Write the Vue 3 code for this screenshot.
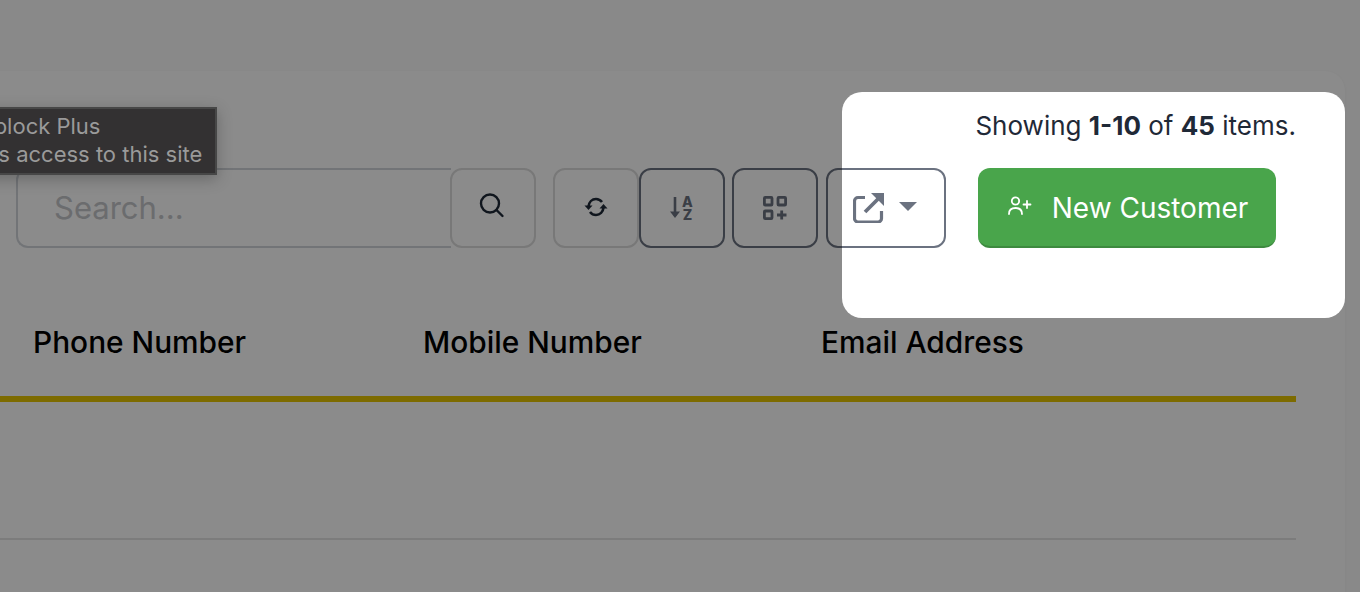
<template>
  <div class="page">
    <div class="card">
      <p class="summary">Showing <b>1-10</b> of <b>45</b> items.</p>

      <div class="toolbar">
        <div class="search-group">
          <input class="search-input" type="text" placeholder="Search..." />
          <button class="btn btn-light search-btn">
            <svg class="nudge-left" width="26" height="26" viewBox="0 0 26 26" fill="none" stroke="#1f2937" stroke-width="2.400" stroke-linecap="round">
              <circle cx="11" cy="10.500" r="9" />
              <path d="M17.500 17l6 6" />
            </svg>
          </button>
        </div>
        <button class="btn btn-light refresh-btn">
          <svg class="nudge-up" width="24" height="20" viewBox="0 0 24 20" fill="none" stroke="#1f2937" stroke-width="2.600">
            <path d="M4.500 9.500C5 5 8 2 12 2c2.600 0 4.600 1.200 6 3" />
            <path d="M19.500 10.500C19 15 16 18 12 18c-2.600 0-4.600-1.200-6-3" />
            <path d="M0.500 8.500h8l-4 4.500z" fill="#1f2937" stroke="none" />
            <path d="M15.500 11.500h8l-4-4.500z" fill="#1f2937" stroke="none" />
          </svg>
        </button>
        <button class="btn btn-dark sort-btn">
          <svg width="26" height="28" viewBox="0 0 26 28" fill="none">
            <path d="M6 3v19" stroke="#6b7280" stroke-width="2.600" />
            <path d="M1 17.500h10L6 24z" fill="#6b7280" />
            <text x="18.500" y="13" class="sort-letter">A</text>
            <text x="18.500" y="26" class="sort-letter">Z</text>
          </svg>
        </button>
        <button class="btn btn-dark columns-btn">
          <svg width="24" height="24" viewBox="0 0 24 24" fill="none" stroke="#6b7280" stroke-width="2.800">
            <rect x="1.400" y="1.400" width="7.600" height="7.600" rx="0.800" />
            <rect x="15" y="1.400" width="7.600" height="7.600" rx="0.800" />
            <rect x="1.400" y="15" width="7.600" height="7.600" rx="0.800" />
            <path d="M18.700 14.500v9M14 19h9.500" />
          </svg>
        </button>
        <button class="btn btn-dark export-btn">
          <svg width="31" height="30" viewBox="0 0 31 30" fill="none">
            <path d="M12 4.500H5a3.500 3.500 0 0 0-3.500 3.500v17.500A3.500 3.500 0 0 0 5 29h20a3.500 3.500 0 0 0 3.500-3.500V18" stroke="#6b7280" stroke-width="3.200" />
            <path d="M12 19L25 6" stroke="#6b7280" stroke-width="3.800" />
            <path d="M18 0H31V13z" fill="#6b7280" />
          </svg>
          <span class="caret"></span>
        </button>
        <button class="btn new-btn">
          <svg class="nudge-up" width="24" height="19" viewBox="0 0 24 19" fill="none" stroke="#fff" stroke-width="1.800" stroke-linecap="round">
            <circle cx="7.500" cy="5" r="3.700" />
            <path d="M1 18c0-4 2.500-6 6.500-6s6.500 2 6.500 6" />
            <path d="M19 5v7M15.500 8.500h7" />
          </svg>
          <span>New Customer</span>
        </button>
      </div>

      <div class="table-head">
        <div v-for="col in columns" :key="col">{{ col }}</div>
      </div>
      <div class="table-row"></div>
    </div>

    <div class="tooltip">
      <div class="tooltip-title">Adblock Plus</div>
      <div>has access to this site</div>
    </div>
    <div class="spotlight"></div>
  </div>
</template>

<script setup>
const columns = ['Phone Number', 'Mobile Number', 'Email Address']
</script>

<style>
html,
body {
  overflow: hidden;
}
</style>

<style scoped>
.page {
  position: relative;
  box-sizing: border-box;
  height: 592px;
  padding-top: 71px;
  overflow: hidden;
  background: #fbfbfb;
  font-family: Inter, 'Liberation Sans', sans-serif;
}

.card {
  box-sizing: border-box;
  width: 1385px;
  height: 640px;
  margin-left: -40px;
  padding: 40px 49px 0 56px;
  background: #fff;
  border-radius: 20px;
  box-shadow: 0 1px 3px rgba(0, 0, 0, 0.05);
}

.summary {
  margin: 0 0 27px;
  height: 30px;
  line-height: 30px;
  font-size: 26px;
  color: #1f2937;
  text-align: right;
}

.summary b {
  font-weight: 700;
}

.toolbar {
  display: flex;
  height: 80px;
}

.search-group {
  display: flex;
}

.search-input {
  box-sizing: border-box;
  width: 435px;
  height: 80px;
  padding: 0 36px 2px;
  font-family: inherit;
  font-size: 31px;
  border: 2px solid #d1d5db;
  border-right: none;
  border-radius: 12px 0 0 12px;
  outline: none;
}

.search-input::placeholder {
  color: #c4c6ca;
  opacity: 1;
}

.btn {
  box-sizing: border-box;
  display: flex;
  align-items: center;
  justify-content: center;
  height: 80px;
  width: 86px;
  padding: 0;
  background: #fff;
  border-radius: 12px;
  font-family: inherit;
}

.btn-light {
  border: 2px solid #dcdcdc;
}

.btn-dark {
  border: 2px solid #6b7280;
}

.nudge-left {
  margin: 0 2px 5px 0;
}

.nudge-up {
  margin-bottom: 3px;
}

.search-btn {
  margin-left: -1px;
}

.refresh-btn {
  margin-left: 17px;
}

.columns-btn {
  margin-left: 7px;
}

.export-btn {
  width: 120px;
  margin-left: 8px;
  gap: 15px;
  padding-right: 2px;
}

.caret {
  width: 0;
  height: 0;
  margin-bottom: 3px;
  border-left: 9px solid transparent;
  border-right: 9px solid transparent;
  border-top: 9px solid #6b7280;
}

.new-btn {
  width: 298px;
  margin-left: 32px;
  gap: 20px;
  padding-left: 2px;
  background: #49a54b;
  border: none;
  border-bottom: 2px solid #3d8a3f;
  color: #fff;
  font-size: 28px;
  font-weight: 400;
}

.new-btn span {
  position: relative;
  top: 1px;
}

.table-head {
  display: grid;
  grid-template-columns: 390px 398px 1fr;
  margin: 66px 0 0 -56px;
  padding: 0 0 26px 73px;
  border-bottom: 6px solid #e6c400;
  font-size: 29.850px;
  font-weight: 500;
  line-height: 56px;
  color: #000;
}

.table-row {
  height: 136px;
  margin-left: -56px;
  border-bottom: 2px solid #e4e4e4;
}

.tooltip {
  position: absolute;
  z-index: 3;
  left: -44px;
  top: 107px;
  box-sizing: border-box;
  height: 68px;
  width: 261px;
  padding: 3px 15px;
  background: #333132;
  border: 2px solid #474747;
  box-shadow: 0 4px 14px rgba(0, 0, 0, 0.25);
  color: #9a9a9a;
  font-size: 22px;
  line-height: 28px;
  white-space: nowrap;
}

.tooltip-title {
  margin-left: -8px;
}

.spotlight {
  position: absolute;
  z-index: 2;
  left: 842px;
  top: 92px;
  width: 503px;
  height: 226px;
  border-radius: 20px;
  box-shadow: 0 0 0 2000px rgba(0, 0, 0, 0.455);
}

.sort-letter {
  font-family: Inter, 'Liberation Sans', sans-serif;
  font-size: 14px;
  font-weight: 800;
  fill: #6b7280;
  text-anchor: middle;
}
</style>
